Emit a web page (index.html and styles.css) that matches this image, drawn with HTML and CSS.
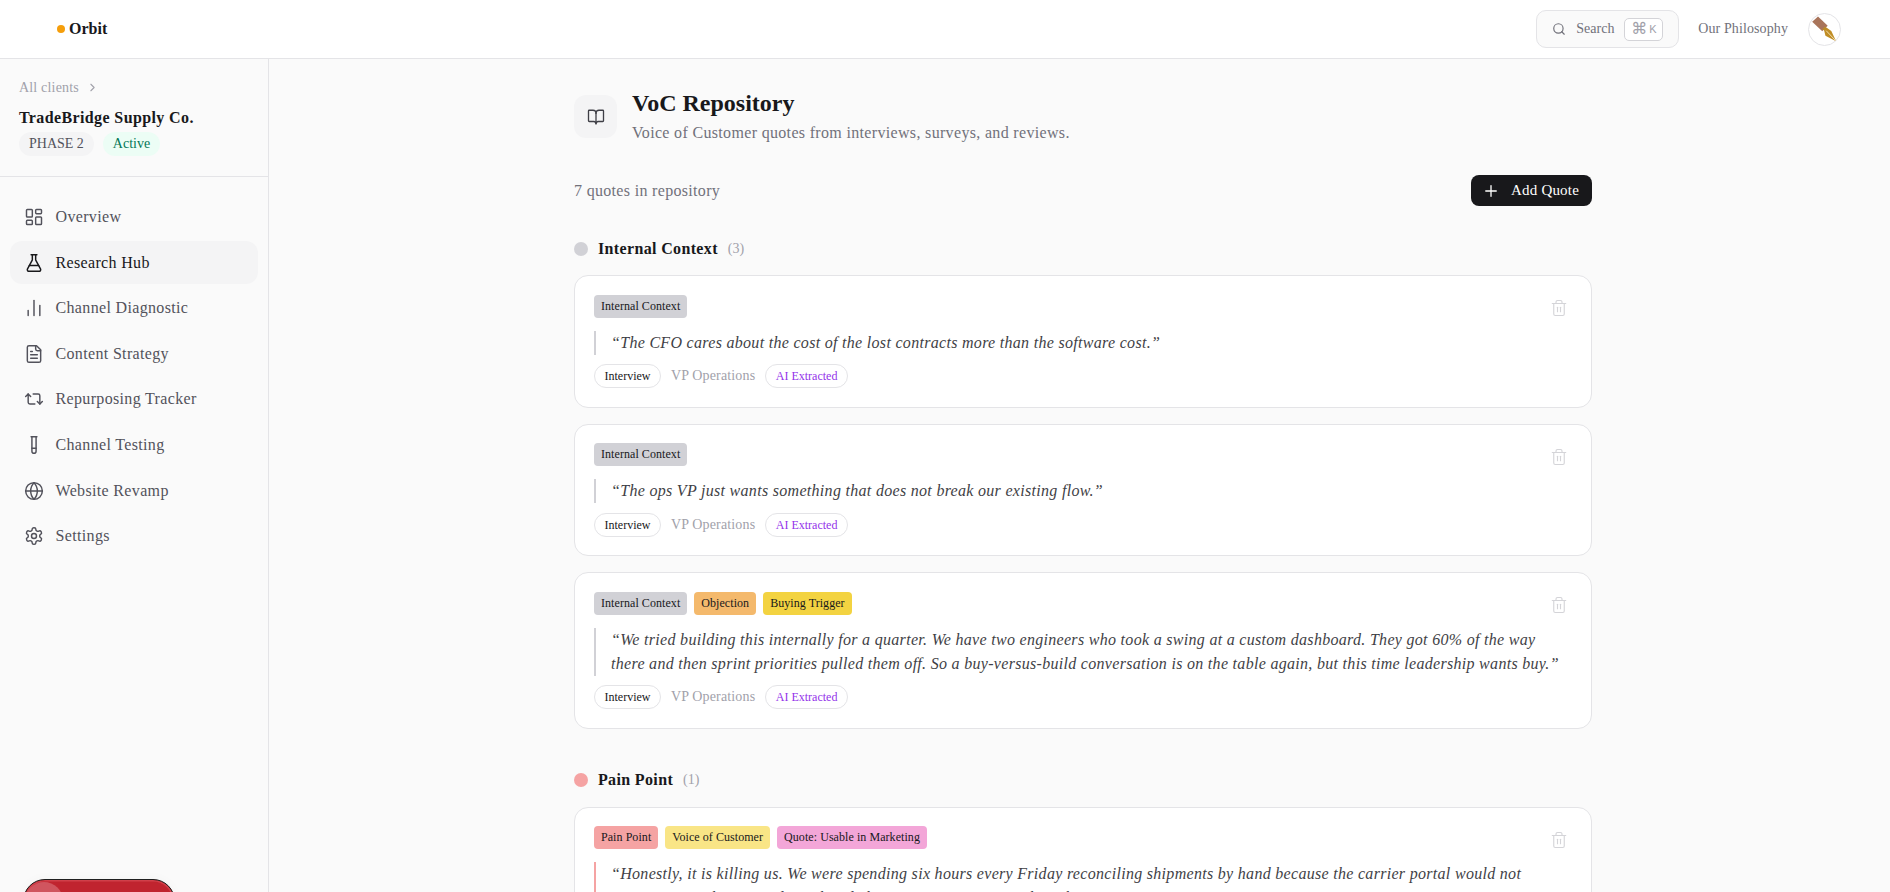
FILE: index.html
```html
<!DOCTYPE html>
<html lang="en">
<head>
<meta charset="utf-8">
<title>VoC Repository</title>
<link rel="stylesheet" href="styles.css">
</head>
<body>
<header class="topbar">
  <div class="brand"><span class="brand-dot"></span><span>Orbit</span></div>
  <div class="top-actions">
    <div class="search">
      <svg class="ic14" viewBox="0 0 24 24"><circle cx="11" cy="11" r="8"/><path d="m21 21-4.3-4.3"/></svg>
      <span>Search</span>
      <span class="kbd"><span class="cmd">⌘</span><span class="k">K</span></span>
    </div>
    <span class="philosophy">Our Philosophy</span>
    <div class="avatar">
      <svg class="pen" viewBox="0 0 32 32" width="31" height="31"><path d="M3.3 8 9.3 2.7 19.3 12 13.7 17.7z" fill="#a9745a"/><path d="M13.5 16 16.5 13 18.5 15 16.5 17z" fill="#b98a2a"/><path d="M15.5 16.5 18 14 23 17.5 28 28 17 22.5z" fill="#c08d24"/><path d="M18 17.5 27 27" stroke="#f5e7c4" stroke-width=".9"/></svg>
    </div>
  </div>
</header>
<div class="shell">
  <aside class="sidebar">
    <div class="client">
      <div class="crumb">All clients <svg viewBox="0 0 24 24"><path d="m9 18 6-6-6-6"/></svg></div>
      <div class="client-name">TradeBridge Supply Co.</div>
      <div class="badges"><span class="badge-phase">PHASE 2</span><span class="badge-active">Active</span></div>
    </div>
    <nav class="nav">
      <a class="nav-item"><svg viewBox="0 0 24 24"><rect x="3" y="3" width="7" height="9" rx="1"/><rect x="14" y="3" width="7" height="5" rx="1"/><rect x="14" y="12" width="7" height="9" rx="1"/><rect x="3" y="16" width="7" height="5" rx="1"/></svg>Overview</a>
      <a class="nav-item active"><svg viewBox="0 0 24 24"><path d="M14 2v6a2 2 0 0 0 .245.96l5.51 10.08A2 2 0 0 1 18 22H6a2 2 0 0 1-1.755-2.96l5.51-10.08A2 2 0 0 0 10 8V2"/><path d="M6.453 15h11.094"/><path d="M8.5 2h7"/></svg>Research Hub</a>
      <a class="nav-item"><svg viewBox="0 0 24 24"><path d="M5 21v-6"/><path d="M12 21V3"/><path d="M19 21V9"/></svg>Channel Diagnostic</a>
      <a class="nav-item"><svg viewBox="0 0 24 24"><path d="M15 2H6a2 2 0 0 0-2 2v16a2 2 0 0 0 2 2h12a2 2 0 0 0 2-2V7Z"/><path d="M14 2v4a2 2 0 0 0 2 2h4"/><path d="M10 9H8"/><path d="M16 13H8"/><path d="M16 17H8"/></svg>Content Strategy</a>
      <a class="nav-item"><svg viewBox="0 0 24 24"><path d="m2 9 3-3 3 3"/><path d="M13 18H7a2 2 0 0 1-2-2V6"/><path d="m22 15-3 3-3-3"/><path d="M11 6h6a2 2 0 0 1 2 2v10"/></svg>Repurposing Tracker</a>
      <a class="nav-item"><svg viewBox="0 0 24 24"><path d="M14.5 2v17.5c0 1.4-1.1 2.5-2.5 2.5c-1.4 0-2.5-1.1-2.5-2.5V2"/><path d="M8.5 2h7"/><path d="M14.5 16h-5"/></svg>Channel Testing</a>
      <a class="nav-item"><svg viewBox="0 0 24 24"><circle cx="12" cy="12" r="10"/><path d="M12 2a14.5 14.5 0 0 0 0 20 14.5 14.5 0 0 0 0-20"/><path d="M2 12h20"/></svg>Website Revamp</a>
      <a class="nav-item"><svg viewBox="0 0 24 24"><path d="M12.22 2h-.44a2 2 0 0 0-2 2v.18a2 2 0 0 1-1 1.73l-.43.25a2 2 0 0 1-2 0l-.15-.08a2 2 0 0 0-2.73.73l-.22.38a2 2 0 0 0 .73 2.73l.15.1a2 2 0 0 1 1 1.72v.51a2 2 0 0 1-1 1.74l-.15.09a2 2 0 0 0-.73 2.73l.22.38a2 2 0 0 0 2.73.73l.15-.08a2 2 0 0 1 2 0l.43.25a2 2 0 0 1 1 1.73V20a2 2 0 0 0 2 2h.44a2 2 0 0 0 2-2v-.18a2 2 0 0 1 1-1.73l.43-.25a2 2 0 0 1 2 0l.15.08a2 2 0 0 0 2.73-.73l.22-.39a2 2 0 0 0-.73-2.73l-.15-.08a2 2 0 0 1-1-1.74v-.5a2 2 0 0 1 1-1.74l.15-.09a2 2 0 0 0 .73-2.73l-.22-.38a2 2 0 0 0-2.73-.73l-.15.08a2 2 0 0 1-2 0l-.43-.25a2 2 0 0 1-1-1.73V4a2 2 0 0 0-2-2z"/><circle cx="12" cy="12" r="3"/></svg>Settings</a>
    </nav>
    <div class="red-pill"><span class="red-knob"></span></div>
  </aside>
  <main class="main">
    <div class="page-head">
      <div class="head-icon"><svg viewBox="0 0 24 24"><path d="M12 7v14"/><path d="M3 18a1 1 0 0 1-1-1V4a1 1 0 0 1 1-1h5a4 4 0 0 1 4 4 4 4 0 0 1 4-4h5a1 1 0 0 1 1 1v13a1 1 0 0 1-1 1h-6a3 3 0 0 0-3 3 3 3 0 0 0-3-3z"/></svg></div>
      <div>
        <h1 class="title">VoC Repository</h1>
        <p class="subtitle">Voice of Customer quotes from interviews, surveys, and reviews.</p>
      </div>
    </div>
    <div class="toolbar">
      <span class="count">7 quotes in repository</span>
      <button class="add"><svg viewBox="0 0 24 24"><path d="M5 12h14"/><path d="M12 5v14"/></svg>Add Quote</button>
    </div>

    <section class="group">
      <div class="group-head"><span class="dot grey"></span><span class="group-name">Internal Context</span><span class="group-count">(3)</span></div>
      <article class="card">
        <svg class="trash" viewBox="0 0 24 24"><path d="M10 11v6"/><path d="M14 11v6"/><path d="M19 6v14a2 2 0 0 1-2 2H7a2 2 0 0 1-2-2V6"/><path d="M3 6h18"/><path d="M8 6V4a2 2 0 0 1 2-2h4a2 2 0 0 1 2 2v2"/></svg>
        <div class="tags"><span class="tag grey">Internal Context</span></div>
        <blockquote class="quote grey-line">“The CFO cares about the cost of the lost contracts more than the software cost.”</blockquote>
        <div class="meta"><span class="chip">Interview</span><span class="role">VP Operations</span><span class="chip ai">AI Extracted</span></div>
      </article>
      <article class="card">
        <svg class="trash" viewBox="0 0 24 24"><path d="M10 11v6"/><path d="M14 11v6"/><path d="M19 6v14a2 2 0 0 1-2 2H7a2 2 0 0 1-2-2V6"/><path d="M3 6h18"/><path d="M8 6V4a2 2 0 0 1 2-2h4a2 2 0 0 1 2 2v2"/></svg>
        <div class="tags"><span class="tag grey">Internal Context</span></div>
        <blockquote class="quote grey-line">“The ops VP just wants something that does not break our existing flow.”</blockquote>
        <div class="meta"><span class="chip">Interview</span><span class="role">VP Operations</span><span class="chip ai">AI Extracted</span></div>
      </article>
      <article class="card">
        <svg class="trash" viewBox="0 0 24 24"><path d="M10 11v6"/><path d="M14 11v6"/><path d="M19 6v14a2 2 0 0 1-2 2H7a2 2 0 0 1-2-2V6"/><path d="M3 6h18"/><path d="M8 6V4a2 2 0 0 1 2-2h4a2 2 0 0 1 2 2v2"/></svg>
        <div class="tags"><span class="tag grey">Internal Context</span><span class="tag orange">Objection</span><span class="tag yellow">Buying Trigger</span></div>
        <blockquote class="quote grey-line multi">“We tried building this internally for a quarter. We have two engineers who took a swing at a custom dashboard. They got 60% of the way<br>there and then sprint priorities pulled them off. So a buy-versus-build conversation is on the table again, but this time leadership wants buy.”</blockquote>
        <div class="meta"><span class="chip">Interview</span><span class="role">VP Operations</span><span class="chip ai">AI Extracted</span></div>
      </article>
    </section>

    <section class="group">
      <div class="group-head"><span class="dot red"></span><span class="group-name">Pain Point</span><span class="group-count">(1)</span></div>
      <article class="card">
        <svg class="trash" viewBox="0 0 24 24"><path d="M10 11v6"/><path d="M14 11v6"/><path d="M19 6v14a2 2 0 0 1-2 2H7a2 2 0 0 1-2-2V6"/><path d="M3 6h18"/><path d="M8 6V4a2 2 0 0 1 2-2h4a2 2 0 0 1 2 2v2"/></svg>
        <div class="tags"><span class="tag red">Pain Point</span><span class="tag lemon">Voice of Customer</span><span class="tag pink">Quote: Usable in Marketing</span></div>
        <blockquote class="quote red-line multi">“Honestly, it is killing us. We were spending six hours every Friday reconciling shipments by hand because the carrier portal would not<br>export to our planner and we already lost one contract over a late shipment.”</blockquote>
        <div class="meta"><span class="chip">Interview</span><span class="role">VP Operations</span><span class="chip ai">AI Extracted</span></div>
      </article>
    </section>
  </main>
</div>
</body>
</html>
```
FILE: styles.css
```css
* { box-sizing: border-box; }
html, body { margin: 0; height: 892px; overflow: hidden; }
body { font-family: "Liberation Serif", "Times New Roman", serif; background: #fafafa; color: #18181b; }
svg { fill: none; stroke: currentColor; stroke-width: 2; stroke-linecap: round; stroke-linejoin: round; flex: none; }

.topbar { height: 59px; background: #fff; border-bottom: 1px solid #e4e4e7; display: flex; align-items: center; justify-content: space-between; padding: 0 49px 0 57px; }
.brand { display: flex; align-items: center; gap: 4px; font-size: 16px; font-weight: 700; }
.brand-dot { width: 8px; height: 8px; border-radius: 50%; background: #f59e0b; }
.top-actions { display: flex; align-items: center; }
.search { width: 143px; height: 38px; border: 1px solid #e4e4e7; border-radius: 10px; background: #fafafa; display: flex; align-items: center; padding-left: 15px; font-size: 14px; color: #71717a; }
.ic14 { width: 14px; height: 14px; margin-right: 10px; }
.kbd { margin-left: 10px; width: 39px; height: 23px; border: 1px solid #d4d4d8; border-radius: 5px; background: #fff; display: flex; align-items: center; justify-content: center; gap: 2px; color: #a1a1aa; }
.cmd { font-family: "DejaVu Sans", sans-serif; font-size: 16px; line-height: 1; }
.k { font-family: "Liberation Sans", sans-serif; font-size: 11px; }
.philosophy { margin-left: 19px; font-size: 14px; letter-spacing: .1px; color: #71717a; white-space: nowrap; }
.avatar { margin-left: 20px; width: 33px; height: 33px; border-radius: 50%; border: 1px solid #e4e4e7; overflow: hidden; background: #fff; }
.pen { display: block; stroke: none; }

.shell { display: flex; height: 833px; }
.sidebar { width: 269px; flex: none; border-right: 1px solid #e4e4e7; background: #fafafa; position: relative; overflow: hidden; }
.client { height: 118px; border-bottom: 1px solid #e4e4e7; padding: 21px 19px 0; }
.crumb { display: flex; align-items: center; gap: 7px; font-size: 14px; line-height: 15px; letter-spacing: .18px; color: #a1a1aa; }
.crumb svg { width: 13px; height: 13px; }
.client-name { margin-top: 13.5px; font-size: 16px; line-height: 18px; font-weight: 700; letter-spacing: .38px; color: #18181b; }
.badges { display: flex; gap: 9px; margin-top: 5.5px; font-size: 14px; }
.badge-phase { height: 24px; line-height: 24px; padding: 0 10px; border-radius: 12px; background: #f4f4f5; color: #52525b; }
.badge-active { height: 24px; line-height: 24px; padding: 0 10px; border-radius: 12px; background: #ecfdf5; color: #047857; }
.nav { padding: 18.5px 10px 0; display: flex; flex-direction: column; gap: 2.6px; }
.nav-item { height: 43px; display: flex; align-items: center; gap: 11.5px; padding-left: 14px; border-radius: 12px; font-size: 16px; letter-spacing: .34px; color: #52525b; }
.nav-item svg { width: 20px; height: 20px; stroke-width: 1.75; }
.nav-item.active { background: #f4f4f5; color: #18181b; }
.red-pill { position: absolute; left: 23px; top: 820px; width: 152px; height: 60px; border-radius: 22px; background: #c0242f; border: 1px solid #1f1f1f; overflow: hidden; box-shadow: inset 0 0 0 1.5px #d0404a, 0 0 12px rgba(0,0,0,.03); }
.red-knob { position: absolute; left: 1px; top: 2px; width: 38px; height: 38px; border-radius: 50%; background: #d0555f; }

.main { flex: 1; min-width: 0; padding: 36px 0 0 305px; overflow: hidden; }
.page-head { width: 1018px; display: flex; gap: 15px; }
.head-icon { width: 43px; height: 43px; border-radius: 12px; background: #f4f4f5; display: flex; align-items: center; justify-content: center; color: #3f3f46; }
.head-icon svg { width: 18px; height: 18px; stroke-width: 1.75; }
.title { margin: -8.5px 0 0; font-size: 24px; line-height: 32px; font-weight: 700; color: #18181b; }
.subtitle { margin: 3px 0 0; font-size: 16px; line-height: 22px; letter-spacing: .33px; color: #71717a; }
.toolbar { width: 1018px; display: flex; align-items: center; justify-content: space-between; margin-top: 31.5px; height: 31px; }
.count { font-size: 16px; letter-spacing: .32px; color: #71717a; }
.add { width: 121px; height: 31px; border: 0; border-radius: 8px; background: #18181b; color: #fff; display: flex; align-items: center; gap: 11px; padding: 0 0 0 11px; font: 15px "Liberation Serif", serif; letter-spacing: .2px; }
.add svg { width: 18px; height: 18px; stroke-width: 1.75; }

.group { width: 1018px; margin-top: 32.5px; }
.group + .group { margin-top: 41.5px; }
.group-head { display: flex; align-items: center; height: 20px; margin-bottom: 16.5px; }
.dot { width: 14px; height: 14px; border-radius: 50%; margin-right: 10px; }
.dot.grey { background: #d1d1d6; }
.dot.red { background: #f5a3a3; }
.group-name { font-size: 16px; font-weight: 700; letter-spacing: .35px; color: #18181b; }
.group-count { margin-left: 10px; font-size: 14px; color: #a1a1aa; }
.card { position: relative; background: #fff; border: 1px solid #e4e4e7; border-radius: 14px; padding: 18.5px 19px; margin-bottom: 16.2px; }
.trash { position: absolute; right: 23px; top: 23px; width: 18px; height: 18px; color: #d4d4d8; stroke-width: 1.5; }
.tags { display: flex; gap: 7px; height: 23px; }
.tag { height: 23px; line-height: 23px; padding: 0 7px; border-radius: 4px; font-size: 12px; letter-spacing: .06px; color: #18181b; }
.tag.grey { background: #d1d1d6; }
.tag.orange { background: #f4b96c; }
.tag.yellow { background: #f3d341; }
.tag.red { background: #f5a3a3; }
.tag.lemon { background: #f9e586; }
.tag.pink { background: #f3a6d8; }
.quote { margin: 13px 0 0; padding: 0 0 0 15px; border-left: 2px solid #d1d1d6; font-style: italic; font-size: 16px; line-height: 24px; letter-spacing: .3px; color: #3f3f46; white-space: nowrap; }
.quote.multi { margin-bottom: 1.3px; }
.quote.red-line { border-left-color: #f5a3a3; }
.meta { display: flex; align-items: center; gap: 10px; margin-top: 9.5px; }
.chip { height: 24px; line-height: 22px; padding: 0 9.5px; border: 1px solid #e4e4e7; border-radius: 12px; background: #fff; font-size: 12px; color: #18181b; }
.chip.ai { color: #9333ea; }
.role { font-size: 14px; letter-spacing: .15px; color: #a1a1aa; }
```
